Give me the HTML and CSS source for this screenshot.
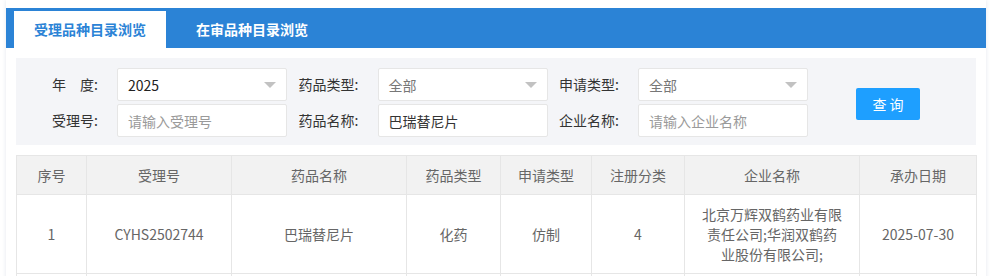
FILE: index.html
```html
<!DOCTYPE html>
<html lang="zh-CN">
<head>
<meta charset="utf-8">
<title>受理品种目录浏览</title>
<link rel="stylesheet" href="styles.css">
</head>
<body>
<div class="card">
  <div class="tabbar">
    <div class="tab active">受理品种目录浏览</div>
    <div class="tab">在审品种目录浏览</div>
  </div>
  <div class="filter">
    <div class="fields">
      <div class="field">
        <label class="lbl">年&emsp;度:</label>
        <div class="select"><span class="val">2025</span><i class="caret"></i></div>
      </div>
      <div class="field">
        <label class="lbl">药品类型:</label>
        <div class="select"><span class="ph">全部</span><i class="caret"></i></div>
      </div>
      <div class="field">
        <label class="lbl">申请类型:</label>
        <div class="select"><span class="ph">全部</span><i class="caret"></i></div>
      </div>
      <div class="field">
        <label class="lbl">受理号:</label>
        <input class="inp" type="text" placeholder="请输入受理号">
      </div>
      <div class="field">
        <label class="lbl">药品名称:</label>
        <input class="inp" type="text" value="巴瑞替尼片">
      </div>
      <div class="field">
        <label class="lbl">企业名称:</label>
        <input class="inp" type="text" placeholder="请输入企业名称">
      </div>
    </div>
    <button class="btn" type="button">查询</button>
  </div>
  <table class="grid">
    <colgroup>
      <col class="w1"><col class="w2"><col class="w3"><col class="w4">
      <col class="w5"><col class="w6"><col class="w7"><col class="w8">
    </colgroup>
    <thead>
      <tr>
        <th>序号</th><th>受理号</th><th>药品名称</th><th>药品类型</th>
        <th>申请类型</th><th>注册分类</th><th>企业名称</th><th>承办日期</th>
      </tr>
    </thead>
    <tbody>
      <tr>
        <td>1</td><td>CYHS2502744</td><td>巴瑞替尼片</td><td>化药</td>
        <td>仿制</td><td>4</td><td class="corp">北京万辉双鹤药业有限责任公司;华润双鹤药业股份有限公司;</td><td>2025-07-30</td>
      </tr>
      <tr>
        <td>&nbsp;</td><td>&nbsp;</td><td>&nbsp;</td><td>&nbsp;</td>
        <td>&nbsp;</td><td>&nbsp;</td><td class="corp">&nbsp;</td><td>&nbsp;</td>
      </tr>
    </tbody>
  </table>
</div>
</body>
</html>
```

FILE: styles.css
```css
html, body {
  margin: 0;
  padding: 0;
  background: #fff;
  overflow: hidden;
}
body {
  font-family: "Microsoft YaHei", "Noto Sans CJK SC", "Noto Sans", sans-serif;
  font-size: 14px;
  color: #333;
}
.card {
  width: 980px;
  margin: 0 5px 0 6px;
  padding-top: 8px;
  background: #fff;
  box-shadow: 0 0 4px rgba(60, 80, 130, 0.14);
  min-height: 400px;
}
.tabbar {
  height: 40px;
  background: #2b83d6;
  display: flex;
  align-items: flex-end;
  padding-left: 8px;
}
.tab {
  height: 37px;
  line-height: 37px;
  padding: 0 20px;
  margin-right: 10px;
  color: #fff;
  font-weight: bold;
  font-size: 14px;
}
.tab.active {
  background: #fff;
  color: #2b83d6;
}
.filter {
  margin: 10px 10px 0;
  background: #f4f5f8;
  height: 87px;
  box-sizing: border-box;
  padding: 10px 0 0 21px;
  display: flex;
  align-items: flex-start;
}
.fields {
  display: grid;
  grid-template-columns: repeat(3, 250px);
  column-gap: 10.5px;
  row-gap: 3px;
}
.field {
  display: flex;
  height: 33px;
}
.lbl {
  width: 80px;
  box-sizing: border-box;
  padding-right: 19px;
  text-align: right;
  line-height: 33px;
  color: #333;
  white-space: nowrap;
}
.select, .inp {
  width: 170px;
  height: 33px;
  box-sizing: border-box;
  border: 1px solid #e6e6e6;
  border-radius: 2px;
  background: #fff;
  padding: 0 10px;
  font: inherit;
  color: #333;
  outline: none;
  margin: 0;
}
.select {
  display: flex;
  align-items: center;
  justify-content: space-between;
}
.val { color: #222; }
.ph { color: #777; }
.inp::placeholder { color: #9a9a9a; }
.caret {
  width: 0;
  height: 0;
  border-style: solid;
  border-width: 6px 6px 0;
  border-color: #c2c2c2 transparent transparent;
  margin-top: 1px;
}
.btn {
  margin: 20px 0 0 48px;
  width: 64px;
  height: 32px;
  border: none;
  border-radius: 2px;
  background: #1e9fff;
  color: #fff;
  font: inherit;
  letter-spacing: 3px;
  padding: 0 0 0 3px;
  cursor: pointer;
}
.grid {
  margin: 10px 10px 0;
  width: 960px;
  border-collapse: collapse;
  table-layout: fixed;
}
.w1 { width: 70px; }
.w2 { width: 145px; }
.w3 { width: 175px; }
.w4 { width: 94px; }
.w5 { width: 91px; }
.w6 { width: 93px; }
.w7 { width: 175px; }
.w8 { width: 117px; }
.grid th, .grid td {
  border: 1px solid #e6e6e6;
  padding: 9px 15px;
  line-height: 20px;
  text-align: center;
  color: #666;
  font-weight: normal;
  vertical-align: middle;
}
.grid th {
  background: #f2f2f2;
}
.grid td.corp {
  padding: 9px 16px;
}
```
